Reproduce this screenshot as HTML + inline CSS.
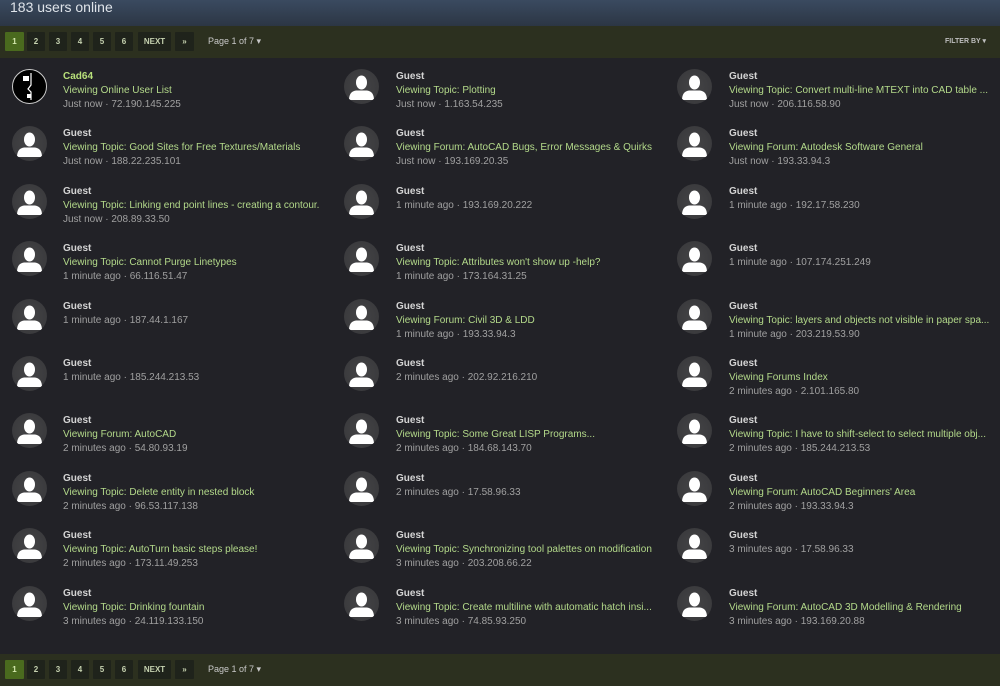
<!DOCTYPE html>
<html><head><meta charset="utf-8"><style>
*{margin:0;padding:0;box-sizing:border-box}
body{width:1000px;height:686px;background:#222227;font-family:"Liberation Sans",sans-serif;position:relative;overflow:hidden}
.hdr{position:absolute;left:0;top:0;width:1000px;height:26px;background:linear-gradient(#3a4a60,#2c3644);color:#dfe4ea;font-size:14px;padding:0 0 0 10px;line-height:15px}
.bar{position:absolute;left:0;width:1000px;height:32px;background:#2c301f}
.b{position:absolute;top:6px;height:19px;background:#1f231b;color:#c6d2b0;font-size:8px;font-weight:bold;text-align:center;line-height:19px;border-radius:1px}
.b.on{background:#4a6a1e;color:#d6eab0}
.pg{position:absolute;left:208px;top:6px;line-height:19px;font-size:9px;color:#c8c8c8}
.fb{position:absolute;right:14px;top:6px;line-height:19px;font-size:7px;font-weight:bold;color:#bfbfbf}
.c{position:absolute;width:300px;font-size:10px;line-height:14px;white-space:nowrap;margin-top:1px}
.n{color:#d4d4d4;font-weight:bold}
.n.g{color:#b8e07a}
.l{color:#b3d98a}
.m{color:#a0a0a0}
.av{position:absolute;width:35px;height:35px;border-radius:50%;background:radial-gradient(#444446,#37373a);overflow:hidden}
</style></head><body>
<div class="hdr">183 users online</div>
<div class="bar" style="top:26px">
<div class="b on" style="left:5px;width:19px">1</div><div class="b" style="left:27px;width:18px">2</div><div class="b" style="left:49px;width:18px">3</div><div class="b" style="left:71px;width:18px">4</div><div class="b" style="left:93px;width:18px">5</div><div class="b" style="left:115px;width:18px">6</div><div class="b" style="left:138px;width:33px">NEXT</div><div class="b" style="left:175px;width:19px">»</div>
<div class="pg">Page 1 of 7 ▾</div><div class="fb">FILTER BY ▾</div></div>
<div class="bar" style="top:654px">
<div class="b on" style="left:5px;width:19px">1</div><div class="b" style="left:27px;width:18px">2</div><div class="b" style="left:49px;width:18px">3</div><div class="b" style="left:71px;width:18px">4</div><div class="b" style="left:93px;width:18px">5</div><div class="b" style="left:115px;width:18px">6</div><div class="b" style="left:138px;width:33px">NEXT</div><div class="b" style="left:175px;width:19px">»</div>
<div class="pg">Page 1 of 7 ▾</div></div>

<svg width="0" height="0" style="position:absolute"><defs><symbol id="g" viewBox="0 0 35 35"><ellipse cx="17.5" cy="13.5" rx="5.5" ry="7" fill="#fff"/><path d="M5 31 Q5 22.5 12 21.5 L23 21.5 Q30 22.5 30 31 Z" fill="#fff"/></symbol></defs></svg>

<div class="av" style="left:12px;top:69px;background:#000;border:1px solid #ccc"><svg width="33" height="33"><rect x="10" y="6" width="6" height="5" fill="#fff"/><path d="M18 3 L18 15 L15 19 L18 22 L18 30" stroke="#fff" stroke-width="1.2" fill="none"/><rect x="14" y="24" width="4" height="4" fill="#fff"/></svg></div>
<div class="c" style="left:63px;top:69px"><div class="n g">Cad64</div><div class="l">Viewing Online User List</div><div class="m">Just now · 72.190.145.225</div></div>

<div class="av" style="left:344px;top:69px"><svg width="35" height="35"><use href="#g"/></svg></div>
<div class="c" style="left:396px;top:69px"><div class="n">Guest</div><div class="l">Viewing Topic: Plotting</div><div class="m">Just now · 1.163.54.235</div></div>
<div class="av" style="left:677px;top:69px"><svg width="35" height="35"><use href="#g"/></svg></div>
<div class="c" style="left:729px;top:69px"><div class="n">Guest</div><div class="l">Viewing Topic: Convert multi-line MTEXT into CAD table ...</div><div class="m">Just now · 206.116.58.90</div></div>

<div class="av" style="left:12px;top:126px"><svg width="35" height="35"><use href="#g"/></svg></div>
<div class="c" style="left:63px;top:126px"><div class="n">Guest</div><div class="l">Viewing Topic: Good Sites for Free Textures/Materials</div><div class="m">Just now · 188.22.235.101</div></div>
<div class="av" style="left:344px;top:126px"><svg width="35" height="35"><use href="#g"/></svg></div>
<div class="c" style="left:396px;top:126px"><div class="n">Guest</div><div class="l">Viewing Forum: AutoCAD Bugs, Error Messages &amp; Quirks</div><div class="m">Just now · 193.169.20.35</div></div>
<div class="av" style="left:677px;top:126px"><svg width="35" height="35"><use href="#g"/></svg></div>
<div class="c" style="left:729px;top:126px"><div class="n">Guest</div><div class="l">Viewing Forum: Autodesk Software General</div><div class="m">Just now · 193.33.94.3</div></div>

<div class="av" style="left:12px;top:184px"><svg width="35" height="35"><use href="#g"/></svg></div>
<div class="c" style="left:63px;top:184px"><div class="n">Guest</div><div class="l">Viewing Topic: Linking end point lines - creating a contour.</div><div class="m">Just now · 208.89.33.50</div></div>
<div class="av" style="left:344px;top:184px"><svg width="35" height="35"><use href="#g"/></svg></div>
<div class="c" style="left:396px;top:184px"><div class="n">Guest</div><div class="m">1 minute ago · 193.169.20.222</div></div>
<div class="av" style="left:677px;top:184px"><svg width="35" height="35"><use href="#g"/></svg></div>
<div class="c" style="left:729px;top:184px"><div class="n">Guest</div><div class="m">1 minute ago · 192.17.58.230</div></div>

<div class="av" style="left:12px;top:241px"><svg width="35" height="35"><use href="#g"/></svg></div>
<div class="c" style="left:63px;top:241px"><div class="n">Guest</div><div class="l">Viewing Topic: Cannot Purge Linetypes</div><div class="m">1 minute ago · 66.116.51.47</div></div>
<div class="av" style="left:344px;top:241px"><svg width="35" height="35"><use href="#g"/></svg></div>
<div class="c" style="left:396px;top:241px"><div class="n">Guest</div><div class="l">Viewing Topic: Attributes won't show up -help?</div><div class="m">1 minute ago · 173.164.31.25</div></div>
<div class="av" style="left:677px;top:241px"><svg width="35" height="35"><use href="#g"/></svg></div>
<div class="c" style="left:729px;top:241px"><div class="n">Guest</div><div class="m">1 minute ago · 107.174.251.249</div></div>

<div class="av" style="left:12px;top:299px"><svg width="35" height="35"><use href="#g"/></svg></div>
<div class="c" style="left:63px;top:299px"><div class="n">Guest</div><div class="m">1 minute ago · 187.44.1.167</div></div>
<div class="av" style="left:344px;top:299px"><svg width="35" height="35"><use href="#g"/></svg></div>
<div class="c" style="left:396px;top:299px"><div class="n">Guest</div><div class="l">Viewing Forum: Civil 3D &amp; LDD</div><div class="m">1 minute ago · 193.33.94.3</div></div>
<div class="av" style="left:677px;top:299px"><svg width="35" height="35"><use href="#g"/></svg></div>
<div class="c" style="left:729px;top:299px"><div class="n">Guest</div><div class="l">Viewing Topic: layers and objects not visible in paper spa...</div><div class="m">1 minute ago · 203.219.53.90</div></div>

<div class="av" style="left:12px;top:356px"><svg width="35" height="35"><use href="#g"/></svg></div>
<div class="c" style="left:63px;top:356px"><div class="n">Guest</div><div class="m">1 minute ago · 185.244.213.53</div></div>
<div class="av" style="left:344px;top:356px"><svg width="35" height="35"><use href="#g"/></svg></div>
<div class="c" style="left:396px;top:356px"><div class="n">Guest</div><div class="m">2 minutes ago · 202.92.216.210</div></div>
<div class="av" style="left:677px;top:356px"><svg width="35" height="35"><use href="#g"/></svg></div>
<div class="c" style="left:729px;top:356px"><div class="n">Guest</div><div class="l">Viewing Forums Index</div><div class="m">2 minutes ago · 2.101.165.80</div></div>

<div class="av" style="left:12px;top:413px"><svg width="35" height="35"><use href="#g"/></svg></div>
<div class="c" style="left:63px;top:413px"><div class="n">Guest</div><div class="l">Viewing Forum: AutoCAD</div><div class="m">2 minutes ago · 54.80.93.19</div></div>
<div class="av" style="left:344px;top:413px"><svg width="35" height="35"><use href="#g"/></svg></div>
<div class="c" style="left:396px;top:413px"><div class="n">Guest</div><div class="l">Viewing Topic: Some Great LISP Programs...</div><div class="m">2 minutes ago · 184.68.143.70</div></div>
<div class="av" style="left:677px;top:413px"><svg width="35" height="35"><use href="#g"/></svg></div>
<div class="c" style="left:729px;top:413px"><div class="n">Guest</div><div class="l">Viewing Topic: I have to shift-select to select multiple obj...</div><div class="m">2 minutes ago · 185.244.213.53</div></div>

<div class="av" style="left:12px;top:471px"><svg width="35" height="35"><use href="#g"/></svg></div>
<div class="c" style="left:63px;top:471px"><div class="n">Guest</div><div class="l">Viewing Topic: Delete entity in nested block</div><div class="m">2 minutes ago · 96.53.117.138</div></div>
<div class="av" style="left:344px;top:471px"><svg width="35" height="35"><use href="#g"/></svg></div>
<div class="c" style="left:396px;top:471px"><div class="n">Guest</div><div class="m">2 minutes ago · 17.58.96.33</div></div>
<div class="av" style="left:677px;top:471px"><svg width="35" height="35"><use href="#g"/></svg></div>
<div class="c" style="left:729px;top:471px"><div class="n">Guest</div><div class="l">Viewing Forum: AutoCAD Beginners' Area</div><div class="m">2 minutes ago · 193.33.94.3</div></div>

<div class="av" style="left:12px;top:528px"><svg width="35" height="35"><use href="#g"/></svg></div>
<div class="c" style="left:63px;top:528px"><div class="n">Guest</div><div class="l">Viewing Topic: AutoTurn basic steps please!</div><div class="m">2 minutes ago · 173.11.49.253</div></div>
<div class="av" style="left:344px;top:528px"><svg width="35" height="35"><use href="#g"/></svg></div>
<div class="c" style="left:396px;top:528px"><div class="n">Guest</div><div class="l">Viewing Topic: Synchronizing tool palettes on modification</div><div class="m">3 minutes ago · 203.208.66.22</div></div>
<div class="av" style="left:677px;top:528px"><svg width="35" height="35"><use href="#g"/></svg></div>
<div class="c" style="left:729px;top:528px"><div class="n">Guest</div><div class="m">3 minutes ago · 17.58.96.33</div></div>

<div class="av" style="left:12px;top:586px"><svg width="35" height="35"><use href="#g"/></svg></div>
<div class="c" style="left:63px;top:586px"><div class="n">Guest</div><div class="l">Viewing Topic: Drinking fountain</div><div class="m">3 minutes ago · 24.119.133.150</div></div>
<div class="av" style="left:344px;top:586px"><svg width="35" height="35"><use href="#g"/></svg></div>
<div class="c" style="left:396px;top:586px"><div class="n">Guest</div><div class="l">Viewing Topic: Create multiline with automatic hatch insi...</div><div class="m">3 minutes ago · 74.85.93.250</div></div>
<div class="av" style="left:677px;top:586px"><svg width="35" height="35"><use href="#g"/></svg></div>
<div class="c" style="left:729px;top:586px"><div class="n">Guest</div><div class="l">Viewing Forum: AutoCAD 3D Modelling &amp; Rendering</div><div class="m">3 minutes ago · 193.169.20.88</div></div>
</body></html>
